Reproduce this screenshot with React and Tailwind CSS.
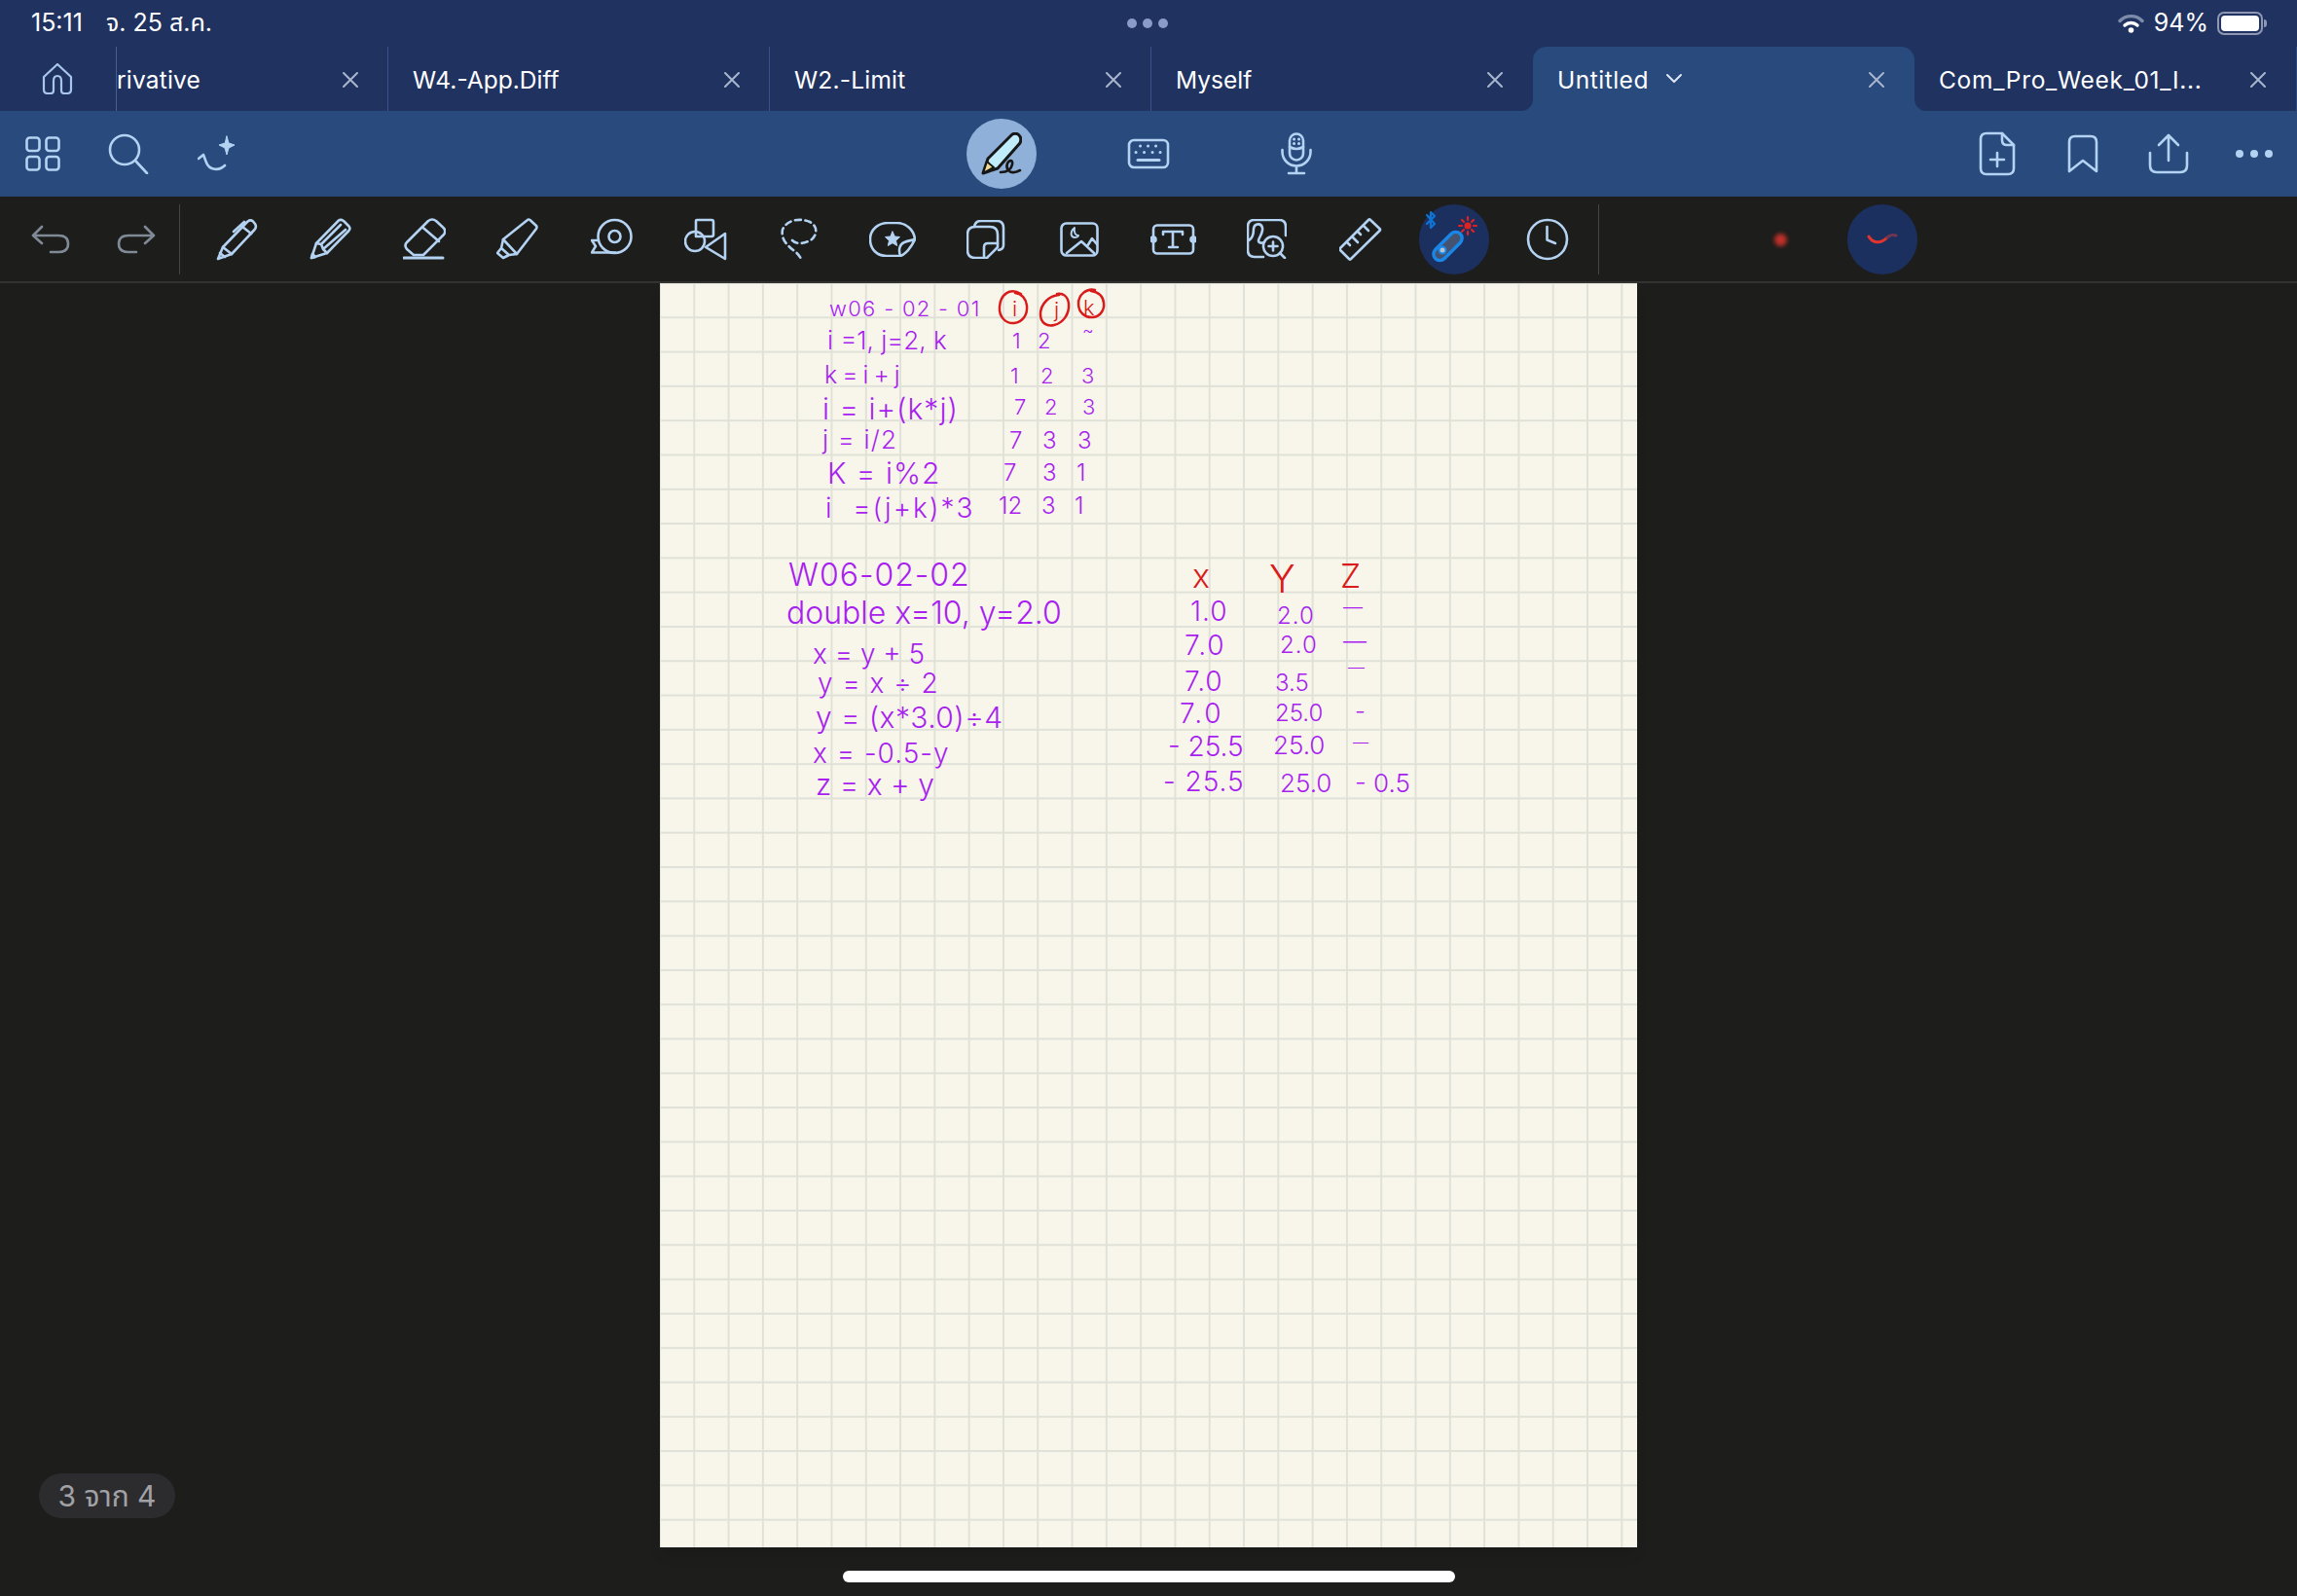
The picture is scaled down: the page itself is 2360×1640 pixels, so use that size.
import React from "react";

const sans = "font-['Inter','Noto_Sans','Noto_Sans_Thai',sans-serif]";

function Icon({ w = 44, h = 44, box = "0 0 44 44", sw = 2.6, className = "text-[#b4d2f2]", children }) {
  return (
    <svg width={w} height={h} viewBox={box} fill="none" stroke="currentColor" strokeWidth={sw} strokeLinecap="round" strokeLinejoin="round" className={className}>
      {children}
    </svg>
  );
}

function Tab({ title, active, shape = "", clip, caret, spacing = "" }) {
  return (
    <div className={`relative flex items-center h-full overflow-hidden ${clip ? "w-[279px]" : "w-[392px]"} ${active ? "bg-[#284a7d] rounded-t-[14px]" : "bg-[#203260]"} ${shape}`}>
      <span className={`text-[24.5px] leading-none text-white whitespace-nowrap pt-[2px] ${clip ? "pl-0" : "pl-[25px]"} ${spacing}`}>{title}</span>
      {caret && (
        <Icon w={20} h={14} box="0 0 20 14" sw={2} className="ml-[16px] text-[#dfe8f5]">
          <path d="M3 3l7 7 7-7" />
        </Icon>
      )}
      <Icon w={18} h={18} box="0 0 18 18" sw={2} className="absolute right-[30px] top-[25px] text-[#a9b6ce]">
        <path d="M2 2l14 14M16 2L2 16" />
      </Icon>
    </div>
  );
}

function Slot({ children }) {
  return <div className="w-[96.15px] flex items-center justify-center shrink-0">{children}</div>;
}

const PencilIcon = () => (
  <Icon>
    <path d="M2 42l5-12L32 4q3-3 6-.500L40 6q2 3-.500 6L16 37z" />
    <path d="M7 30l9 7M4 36l5 4M18 14L29 4M27 9l9 7" />
  </Icon>
);
const FountainIcon = () => (
  <Icon>
    <path d="M2 41l5-15L30 2.500q2-1.500 5 .500l5.500 5.500q2 2.500-.500 5L18 36z" />
    <path d="M7 26l5 1 2 5 4 4M12 27L32 7M14 32L37 12" />
    <path d="M2 41l1-4 3 3z" fill="currentColor" />
  </Icon>
);
const EraserIcon = () => (
  <Icon>
    <path d="M26 3q4-3 8 0l7 6.500q4 3.500 1 7.500L21 38H11l-7-6q-3-4 0-7z" />
    <path d="M20.700 10L37 24" />
    <path d="M1 41h40" strokeWidth="3" />
  </Icon>
);
const MarkerIcon = () => (
  <Icon>
    <path d="M7 22L32 2q1-1 2.500 0L41 8q1 1 0 3L21 37z" />
    <path d="M7 22L5 31l-4 5 6 5 6-3 8-1M5 31l8 7" />
  </Icon>
);
const TapeIcon = () => (
  <Icon>
    <circle cx="24.500" cy="19" r="17" />
    <circle cx="24.500" cy="19" r="6" />
    <path d="M8 23H1l4 6-4 6.500h24" />
  </Icon>
);
const ShapesIcon = () => (
  <Icon>
    <path d="M12 3q0-1 1-1h15q2 0 2 2v13q0 2-2 2H12z" />
    <circle cx="11" cy="24" r="10" />
    <path d="M42 16v26L22 30z" />
  </Icon>
);
const LassoIcon = () => (
  <Icon w={40} box="0 0 40 44">
    <path strokeDasharray="6 4.500" d="M13 23c5 5 14 3 20-1 6-5 6-14-2-18C22 0 8 1 3 12c-2 10 5 16 11 21 3 2 6 5 8 9" />
  </Icon>
);
const StickerIcon = () => (
  <Icon w={48} h={36} box="0 0 48 36">
    <path d="M32 35H18C8 35 1 28 1 18S9 1 20 1h8c10 0 18 7 19 17" />
    <path d="M47 18c-5 10-9 15-15 17-2-6-1-12 4-14 4-2 8-2 11-3z" />
    <path d="M24 10l2.300 5 5.200.500-4 3.700 1.200 5.300-4.700-2.800-4.700 2.800 1.200-5.300-4-3.700 5.200-.500z" fill="currentColor" strokeWidth="1" />
  </Icon>
);
const NotesIcon = () => (
  <Icon w={40} h={40} box="0 0 40 40">
    <path d="M8 7h16q8 0 8 8v13L21 39H9q-8 0-8-8V15q0-8 8-8z" />
    <path d="M32 24H22q-4 0-4 4v10" />
    <path d="M8 7q1-6 7-6h16q7 0 7 7v18q0 4-5 5" />
  </Icon>
);
const ImageIcon = () => (
  <Icon w={40} h={36} box="0 0 40 36">
    <rect x="1.500" y="1.500" width="37" height="33" rx="5" />
    <path d="M7 32l15-12 13 12M28 25l5-8 5 6" />
    <path d="M15 6c-4 3-5 9 0 10 2 0 4-1 4-2-3 0-5-3-4-8z" strokeWidth="2" />
  </Icon>
);
const TextIcon = () => (
  <Icon w={47} h={32} box="0 0 47 32">
    <rect x="3" y="1.500" width="41" height="29" rx="4" />
    <path d="M13 11V8h20v3M23 8v16M19 24h9" />
    <circle cx="3" cy="16" r="2.500" fill="currentColor" />
    <circle cx="44" cy="16" r="2.500" fill="currentColor" />
  </Icon>
);
const FindIcon = () => (
  <Icon w={41} h={41} box="0 0 41 41">
    <path d="M17 39H8q-7 0-7-7V8q0-7 7-7h25q7 0 7 7v9" />
    <path d="M2 22c4-2 5-8 5-12 1-6 8-6 9-1 1 5-3 9-4 13 0 3 3 3 6 2" />
    <circle cx="27" cy="28" r="10" />
    <path d="M27 23.500v9M22.500 28h9M34 35l5 5" />
  </Icon>
);
const RulerIcon = () => (
  <Icon>
    <path d="M30 2q1-1 2 0l9.500 9q1 1 0 2L12 42q-1 1-2 0l-9-9q-1-1 0-2z" />
    <path d="M25 8l5 5M19 14l3 3M14 20l5 5M8 25l3 3" />
  </Icon>
);
const ClockIcon = () => (
  <Icon>
    <circle cx="22" cy="22" r="20" />
    <path d="M21.500 9v13.500L30 26" />
  </Icon>
);

function Ink({ className, children }) {
  return <span className={`absolute whitespace-pre leading-none font-['Inter'] font-light text-[#a81ff0] ${className}`}>{children}</span>;
}

const tokens = [
  ["w06 - 02 - 01", "left-[174px] top-[15px] text-[22px] tracking-[1.3px]"],
  ["i =1, j=2, k", "left-[172px] top-[46px] text-[26px]"],
  ["k = i + j", "left-[169px] top-[82px] text-[25px] tracking-[-1px]"],
  ["i = i+(k*j)", "left-[167px] top-[114px] text-[30px] tracking-[1px]"],
  ["j = i/2", "left-[167px] top-[148px] text-[26px] tracking-[1.2px]"],
  ["K = i%2", "left-[172px] top-[180px] text-[30px] tracking-[1px]"],
  ["i  =(j+k)*3", "left-[170px] top-[217px] text-[28px] tracking-[2px]"],

  ["1", "left-[362px] top-[48px] text-[22px]"],
  ["2", "left-[388px] top-[48px] text-[22px]"],
  ["~", "left-[434px] top-[40px] text-[18px]"],
  ["1", "left-[360px] top-[84px] text-[22px]"],
  ["2", "left-[391px] top-[84px] text-[22px]"],
  ["3", "left-[433px] top-[84px] text-[22px]"],
  ["7", "left-[364px] top-[116px] text-[22px]"],
  ["2", "left-[395px] top-[116px] text-[22px]"],
  ["3", "left-[434px] top-[116px] text-[22px]"],
  ["7", "left-[359px] top-[150px] text-[24px]"],
  ["3", "left-[393px] top-[150px] text-[24px]"],
  ["3", "left-[429px] top-[150px] text-[24px]"],
  ["7", "left-[353px] top-[183px] text-[24px]"],
  ["3", "left-[393px] top-[183px] text-[24px]"],
  ["1", "left-[428px] top-[183px] text-[24px]"],
  ["12", "left-[348px] top-[217px] text-[24px]"],
  ["3", "left-[392px] top-[217px] text-[24px]"],
  ["1", "left-[426px] top-[217px] text-[24px]"],

  ["W06-02-02", "left-[132px] top-[284px] text-[32px] tracking-[1px]"],
  ["double x=10, y=2.0", "left-[130px] top-[323px] text-[32px]"],
  ["x = y + 5", "left-[157px] top-[367px] text-[28px]"],
  ["y = x ÷ 2", "left-[162px] top-[397px] text-[28px] tracking-[1px]"],
  ["y = (x*3.0)÷4", "left-[160px] top-[431px] text-[30px] tracking-[0.4px]"],
  ["x = -0.5-y", "left-[157px] top-[469px] text-[28px] tracking-[1px]"],
  ["z = x + y", "left-[160px] top-[500px] text-[30px]"],

  ["1.0", "left-[545px] top-[323px] text-[28px] tracking-[1px]"],
  ["2.0", "left-[634px] top-[330px] text-[24px] tracking-[1px]"],
  ["—", "left-[702px] top-[323px] text-[20px]"],
  ["7.0", "left-[539px] top-[358px] text-[28px] tracking-[2px]"],
  ["2.0", "left-[637px] top-[360px] text-[24px] tracking-[1px]"],
  ["—", "left-[702px] top-[356px] text-[24px]"],
  ["7.0", "left-[539px] top-[395px] text-[28px] tracking-[1px]"],
  ["3.5", "left-[632px] top-[399px] text-[24px]"],
  ["—", "left-[707px] top-[387px] text-[17px]"],
  ["7.0", "left-[534px] top-[428px] text-[28px] tracking-[3px]"],
  ["25.0", "left-[632px] top-[430px] text-[24px]"],
  ["-", "left-[714px] top-[428px] text-[24px]"],
  ["- 25.5", "left-[522px] top-[462px] text-[28px]"],
  ["25.0", "left-[630px] top-[462px] text-[26px]"],
  ["—", "left-[712px] top-[463px] text-[16px]"],
  ["- 25.5", "left-[517px] top-[498px] text-[28px] tracking-[1px]"],
  ["25.0", "left-[637px] top-[501px] text-[26px]"],
  ["- 0.5", "left-[714px] top-[501px] text-[26px]"],
];

export default function App() {
  return (
    <div className={`relative flex flex-col w-[2360px] h-[1640px] overflow-hidden bg-[#1d1d1b] ${sans}`}>
      {/* status bar */}
      <div className="relative h-[48px] shrink-0 bg-[#203260] flex items-center justify-between pl-[32px] pr-[31px] text-white text-[25px]">
        <div className="flex items-center gap-[24px]">
          <span>15:11</span>
          <span>จ. 25 ส.ค.</span>
        </div>
        <div className="absolute left-[1158px] top-[19px] flex gap-[6px]">
          <span className="w-[10px] h-[10px] rounded-full bg-[#8b9bc9]" />
          <span className="w-[10px] h-[10px] rounded-full bg-[#8b9bc9]" />
          <span className="w-[10px] h-[10px] rounded-full bg-[#8b9bc9]" />
        </div>
        <div className="flex items-center">
          <svg width="27" height="20" viewBox="0 0 27 20" fill="none" strokeLinecap="round">
            <path d="M2 7.500a16 16 0 0 1 23 0" stroke="#7d8bab" strokeWidth="3.400" />
            <path d="M7 12a9.500 9.500 0 0 1 13 0" stroke="#fff" strokeWidth="3.400" />
            <circle cx="13.500" cy="17" r="2.800" fill="#fff" />
          </svg>
          <span className="ml-[10px]">94%</span>
          <div className="ml-[9px] w-[47px] h-[24px] rounded-[7px] border-2 border-[#8e98b4] p-[2px]">
            <div className="w-full h-full rounded-[4px] bg-white" />
          </div>
          <div className="w-[3px] h-[8px] rounded-r-full bg-[#8e98b4] ml-[1px]" />
        </div>
      </div>

      {/* tabs */}
      <div className="h-[66px] shrink-0 flex bg-[#284a7d]">
        <div className="w-[120px] h-full bg-[#203260] flex items-center justify-center border-r border-[#4c5f8c]">
          <Icon w={32} h={32} box="0 0 32 32" sw={2.200} className="text-[#a8c6ea] mr-[1px]">
            <path d="M2 14L16 1l14 13v13q0 4-4 4h-3q-3 0-3-3V18q0-5-4-5t-4 5v10q0 3-3 3H6q-4 0-4-4z" />
          </Icon>
        </div>
        <Tab title="rivative" clip spacing="tracking-[0.2px]" />
        <div className="w-px bg-[#3b5288] -ml-px z-10" />
        <Tab title="W4.-App.Diff" />
        <div className="w-px bg-[#3b5288] -ml-px z-10" />
        <Tab title="W2.-Limit" spacing="tracking-[0.2px]" />
        <div className="w-px bg-[#3b5288] -ml-px z-10" />
        <Tab title="Myself" shape="rounded-br-[12px]" />
        <div className="bg-[#203260] h-full">
          <Tab title="Untitled" active caret spacing="tracking-[0.5px]" />
        </div>
        <Tab title="Com_Pro_Week_01_I..." shape="rounded-bl-[12px]" spacing="tracking-[0.7px]" />
      </div>

      {/* main toolbar */}
      <div className="relative h-[88px] shrink-0 bg-[#284a7d] flex items-center pl-[26px] pr-[25px]">
        <Icon w={36} h={36} box="0 0 36 36" sw={2.600}>
          <rect x="1.500" y="1.500" width="13" height="13.500" rx="3" />
          <rect x="21.500" y="1.500" width="13" height="13.500" rx="3" />
          <rect x="1.500" y="21" width="13" height="13.500" rx="3" />
          <rect x="21.500" y="21" width="13" height="13.500" rx="3" />
        </Icon>
        <Icon w={42} h={42} box="0 0 42 42" sw={2.600} className="ml-[49px] text-[#b4d2f2]">
          <circle cx="17" cy="17" r="15" />
          <path d="M28 28l12 13" />
        </Icon>
        <Icon w={40} h={38} box="0 0 40 38" sw={2.600} className="ml-[50px] text-[#b4d2f2]">
          <path d="M1 24l5-4 3 8c3 8 13 9 19 3" />
          <path d="M30 1l2 7 6 2-6 3-2 7-2-7-6-3 6-2z" fill="currentColor" strokeWidth="1" />
        </Icon>
        <div className="absolute left-[993px] top-[8px] w-[72px] h-[72px] rounded-full bg-[#8fb0d8] flex items-center justify-center">
          <svg width="42" height="44" viewBox="0 0 42 44" fill="none" stroke="#171717" strokeWidth="3" strokeLinecap="round" strokeLinejoin="round">
            <path d="M2 42l5-15L31 3q3-3 7-1l1 1q3 3 1 8L17 37z" fill="#c0ecfb" />
            <path d="M2 42l4-12 7 6z" fill="#f2dc94" strokeWidth="2" />
            <path d="M20 41c7 0 11-3 12-8 1-5-3-5-5-1-2 5 2 10 7 9 2 0 4-1 6-2" strokeWidth="2.600" />
          </svg>
        </div>
        <div className="absolute left-[1158px] top-[28px]">
          <Icon w={44} h={32} box="0 0 44 32" sw={2.600}>
            <rect x="2" y="2" width="40" height="28" rx="5" />
            <path d="M11 22.500h22" strokeWidth="3" />
            <path d="M13.500 8h.1M21.500 8h.1M29.500 8h.1M9 14.500h.1M17.500 14.500h.1M26 14.500h.1M34 14.500h.1" strokeWidth="3" />
          </Icon>
        </div>
        <div className="absolute left-[1316px] top-[22px]">
          <Icon w={32} h={44} box="0 0 32 44" sw={2.600}>
            <rect x="9" y="1.500" width="14" height="27" rx="7" />
            <path d="M9 15q7 4 14 0M1.500 18v2a14.500 14.500 0 0 0 29 0v-2M16 35v7M8 42h16" />
            <path d="M13.500 7h.1M18.500 7h.1M13.500 11.500h.1M18.500 11.500h.1" strokeWidth="3" />
          </Icon>
        </div>
        <div className="ml-auto flex items-center">
          <Icon w={38} h={46} box="0 0 38 46" sw={2.600}>
            <path d="M24 2H8Q2 2 2 8v30q0 6 6 6h22q6 0 6-6V14z" />
            <path d="M24 2v7q0 5 5 5h7M19 22v14M12 29h14" />
          </Icon>
          <Icon w={32} h={40} box="0 0 32 40" sw={2.600} className="ml-[53px] text-[#b4d2f2]">
            <path d="M2 38V8q0-6 6-6h16q6 0 6 6v30L16 27z" />
          </Icon>
          <Icon w={42} h={42} box="0 0 42 42" sw={2.600} className="ml-[51px] text-[#b4d2f2]">
            <path d="M21 28V2M11 12L21 2l10 10M2 20v13q0 7 7 7h24q7 0 7-7V20" />
          </Icon>
          <div className="ml-[48px] flex gap-[7px]">
            <span className="w-[8px] h-[8px] rounded-full bg-[#b4d2f2]" />
            <span className="w-[8px] h-[8px] rounded-full bg-[#b4d2f2]" />
            <span className="w-[8px] h-[8px] rounded-full bg-[#b4d2f2]" />
          </div>
        </div>
      </div>

      {/* tool row */}
      <div className="relative h-[89px] shrink-0 bg-[#1d1d1b] border-b-2 border-[#333331] flex items-center">
        <div className="flex items-center pl-[32px] w-[185px] h-[72px] border-r border-[#454543]">
          <Icon w={40} h={30} box="0 0 40 30" sw={2.600} className="text-[#7f8a96]">
            <path d="M11 2L2 11l9 8M2 11h26q10 0 10 8.500T28 28H20" />
          </Icon>
          <Icon w={40} h={30} box="0 0 40 30" sw={2.600} className="ml-[48px] text-[#7f8a96]">
            <path d="M29 2l9 9-9 8M38 11H12q-10 0-10 8.500T12 28h8" />
          </Icon>
        </div>
        <div className="flex items-center pl-[11px]">
          <Slot><PencilIcon /></Slot>
          <Slot><FountainIcon /></Slot>
          <Slot><EraserIcon /></Slot>
          <Slot><MarkerIcon /></Slot>
          <Slot><TapeIcon /></Slot>
          <Slot><ShapesIcon /></Slot>
          <Slot><LassoIcon /></Slot>
          <Slot><StickerIcon /></Slot>
          <Slot><NotesIcon /></Slot>
          <Slot><ImageIcon /></Slot>
          <Slot><TextIcon /></Slot>
          <Slot><FindIcon /></Slot>
          <Slot><RulerIcon /></Slot>
          <Slot>
            <div className="relative w-[72px] h-[72px] rounded-full bg-[#1c3060]">
              <svg width="72" height="72" viewBox="0 0 72 72" fill="none" strokeLinecap="round" strokeLinejoin="round">
                <path d="M8 11l8 9-4 4V8l4 4-8 8" stroke="#0d74d6" strokeWidth="2.200" />
                <path d="M50 13v3M50 28v3M41 22h3M56 22h3M44 16l2 2M54 26l2 2M56 16l-2 2M46 26l-2 2" stroke="#e02222" strokeWidth="2.200" />
                <circle cx="50" cy="22" r="3.500" fill="#e02222" />
                <rect x="11.500" y="36.500" width="36" height="13" rx="6.500" transform="rotate(-45 29.500 43)" fill="#44536f" stroke="#1a86e8" strokeWidth="3.400" />
                <circle cx="24" cy="47" r="4.500" fill="#1a86e8" />
                <circle cx="24" cy="47" r="2.500" fill="#b5c3d0" />
              </svg>
            </div>
          </Slot>
          <Slot><ClockIcon /></Slot>
        </div>
        <div className="absolute left-[1642px] top-[8px] w-px h-[72px] bg-[#454543]" />
        <div className="absolute left-[1823px] top-[38px] w-[13px] h-[13px] rounded-full bg-[#c0302a] blur-[2px]" />
        <div className="absolute left-[1898px] top-[8px] w-[72px] h-[72px] rounded-full bg-[#1c3060] flex items-center justify-center">
          <svg width="34" height="14" viewBox="0 0 34 14" fill="none" strokeLinecap="round">
            <path d="M3 4c4 7 12 8 19 1" stroke="#e0342c" strokeWidth="3" />
            <path d="M22 5c2-2 5-3 9-2" stroke="#70364f" strokeWidth="3" />
          </svg>
        </div>
      </div>

      {/* canvas */}
      <div className="flex-1 flex justify-center">
        <div className="relative w-[1004px] h-[1299px] bg-[#f8f6ea] shadow-lg overflow-hidden bg-[linear-gradient(#e0e1d9_1.5px,transparent_1.5px),linear-gradient(90deg,#e0e1d9_1.5px,transparent_1.5px)] bg-[size:35.3px_35.3px] bg-[position:-1px_-1px]">
          {tokens.map(([text, place], i) => (
            <Ink key={i} className={place}>{text}</Ink>
          ))}
          <svg className="absolute left-[340px] top-[0px]" width="130" height="60" viewBox="0 0 130 60" fill="none" stroke="#d81c1c" strokeWidth="2.500" strokeLinecap="round">
            <path d="M31 11c-12-7-21 1-22 13-1 11 7 18 15 17 9-1 14-9 13-18-1-8-6-12-12-13" />
            <path d="M70 12c-10 1-19 9-19 20 0 9 7 13 14 11 9-2 16-11 15-22-1-8-6-11-12-10" />
            <path d="M107 7c-9-2-17 5-17 14 0 9 7 15 15 14 8-1 12-8 11-15-1-8-6-11-13-12" />
          </svg>
          <Ink className="left-[362px] top-[15px] text-[22px] !text-[#d81c1c]">i</Ink>
          <Ink className="left-[405px] top-[16px] text-[22px] !text-[#d81c1c]">j</Ink>
          <Ink className="left-[435px] top-[14px] text-[22px] !text-[#d81c1c]">k</Ink>
          <Ink className="left-[547px] top-[284px] text-[34px] !text-[#d81c1c]">x</Ink>
          <Ink className="left-[626px] top-[284px] text-[40px] !text-[#d81c1c]">Y</Ink>
          <Ink className="left-[699px] top-[284px] text-[34px] !text-[#d81c1c]">Z</Ink>
        </div>
      </div>

      {/* page count */}
      <div className="absolute left-[40px] top-[1514px] w-[140px] h-[46px] rounded-[23px] bg-[#2c2c2e] flex items-center justify-center text-[30px] text-[#a1a1a6]">
        3 จาก 4
      </div>

      {/* home indicator */}
      <div className="absolute left-[866px] top-[1614px] w-[629px] h-[12px] rounded-full bg-white" />
    </div>
  );
}
